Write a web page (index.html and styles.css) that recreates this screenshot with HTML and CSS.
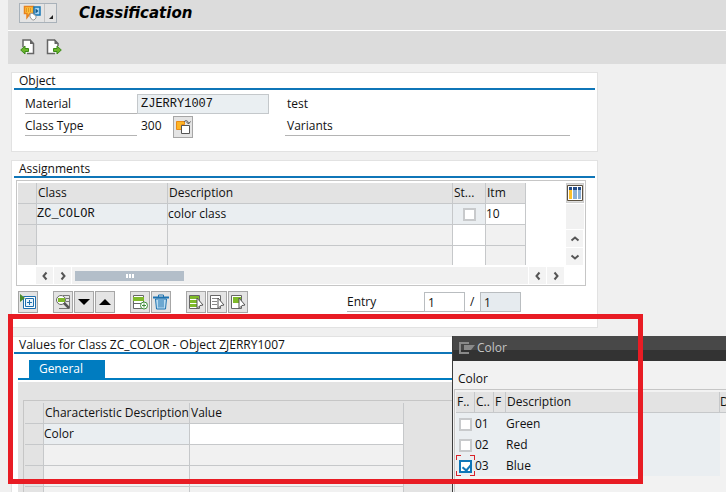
FILE: index.html
```html
<!DOCTYPE html>
<html lang="en">
<head>
    <meta charset="UTF-8">
    <meta name="viewport" content="width=device-width, initial-scale=1.0">
    <title>Classification</title>
    <link rel="stylesheet" href="styles.css">
</head>
<body>
    <div class="window">
        <header class="title-bar">
            <div class="menu-group">
                <button class="menu-main" aria-label="Services">
                    <svg width="18" height="16" viewBox="0 0 18 16">
                        <path d="M1.500 1.500h9v7H7l-3 4v-4H1.500z" fill="#fdc23c" stroke="#e8821e" stroke-width="1.500"/>
                        <path d="M3 4h6M3 6h6" stroke="#c96a10" stroke-dasharray="1 1"/>
                        <path d="M11 2h6v8h-6z" fill="#a8d4f0" stroke="#1576b4" stroke-width="1.500"/>
                        <path d="M12.500 3.500l3 2.500-3 2.500z" fill="#155a8a"/>
                        <path d="M7 9l2-1 4 3v2l-2 2H9.500L7 12z" fill="#fff" stroke="#999"/>
                    </svg>
                </button>
                <button class="menu-arrow" aria-label="More">
                    <svg width="4" height="4" viewBox="0 0 4 4"><path d="M4 0v4H0z" fill="#222"/></svg>
                </button>
            </div>
            <h1>Classification</h1>
        </header>

        <div class="toolbar">
            <button aria-label="Previous object">
                <svg width="16" height="17" viewBox="0 0 16 17">
                    <path d="M3 9V2h7l3.500 3.500V15.500H7" fill="#fff" stroke="#666" stroke-width="1.500"/>
                    <path d="M10 1v5h4z" fill="#666"/>
                    <path d="M.7 12L5 8v2.500h3.500v3H5V16z" fill="#6cb52d" stroke="#3c8a1a"/>
                </svg>
            </button>
            <button aria-label="Next object">
                <svg width="16" height="17" viewBox="0 0 16 17">
                    <path d="M12 8V5.500L8.500 2H1.500v13.500H9" fill="#fff" stroke="#666" stroke-width="1.500"/>
                    <path d="M8.500 1v5h4z" fill="#666"/>
                    <path d="M15.300 12L11 8v2.500H7.500v3H11V16z" fill="#6cb52d" stroke="#3c8a1a"/>
                </svg>
            </button>
        </div>

        <main>
            <section class="group object">
                <h2>Object</h2>
                <div class="fields">
                    <label for="material">Material</label>
                    <input id="material" class="mono" value="ZJERRY1007" readonly>
                    <span class="text">test</span>
                    <span class="label">Class Type</span>
                    <div class="class-type">
                        <span>300</span>
                        <button class="icon-btn" aria-label="Change class type">
                            <svg width="16" height="16" viewBox="0 0 16 16">
                                <path d="M1.500 2.500h8v3h-3v5h-5z" fill="#fdb525" stroke="#e98a15"/>
                                <path d="M6.500 6.500h8v8h-8z" fill="#fff" stroke="#555"/>
                                <path d="M9 3c1-2 4-2 4.500 1.500M11 2.500l2.500 2.500L15.500 2.500" fill="none" stroke="#555"/>
                            </svg>
                        </button>
                    </div>
                    <span class="text underlined">Variants</span>
                </div>
            </section>

            <section class="group assignments">
                <h2>Assignments</h2>
                <div class="table-box">
                    <div class="table-row">
                        <table class="class-table">
                            <colgroup>
                                <col class="c-select"><col class="c-class"><col class="c-desc"><col class="c-status"><col class="c-item">
                            </colgroup>
                            <thead>
                                <tr><th></th><th>Class</th><th>Description</th><th>St...</th><th>Itm</th></tr>
                            </thead>
                            <tbody>
                                <tr class="filled">
                                    <td></td><td class="mono">ZC_COLOR</td><td>color class</td>
                                    <td class="center"><input type="checkbox" aria-label="Standard class"></td>
                                    <td class="editable">10</td>
                                </tr>
                                <tr><td></td><td></td><td></td><td class="editable"></td><td></td></tr>
                                <tr><td></td><td></td><td></td><td class="editable"></td><td></td></tr>
                            </tbody>
                        </table>
                        <div class="v-scroll">
                            <button class="config" aria-label="Configuration">
                                <svg width="16" height="16" viewBox="0 0 16 16">
                                    <path d="M.5.5h15v15H.5z" fill="#fff" stroke="#5a5040"/>
                                    <path d="M2 2h3v3H2zM6 2h4v3H6zM11 2h3v3h-3z" fill="#244c86"/>
                                    <path d="M2 5h3v9H2z" fill="#fcbf2c"/>
                                    <path d="M6 5h4v9H6zM11 5h3v9h-3z" fill="#8cb0d8"/>
                                </svg>
                            </button>
                            <div class="track"></div>
                            <button class="arrow" aria-label="Up"><svg width="10" height="10" viewBox="0 0 10 10"><path d="M1.500 6.500L5 3.500l3.500 3"/></svg></button>
                            <button class="arrow" aria-label="Down"><svg width="10" height="10" viewBox="0 0 10 10"><path d="M1.500 3.500L5 6.500l3.500-3"/></svg></button>
                        </div>
                    </div>
                    <div class="h-scroll">
                        <button class="arrow" aria-label="Left"><svg width="10" height="10" viewBox="0 0 10 10"><path d="M6.500 1.500L3.500 5l3 3.500"/></svg></button>
                        <button class="arrow" aria-label="Right"><svg width="10" height="10" viewBox="0 0 10 10"><path d="M3.500 1.500L6.500 5l-3 3.500"/></svg></button>
                        <div class="track">
                            <div class="thumb"><i></i><i></i><i></i></div>
                        </div>
                        <button class="arrow" aria-label="Left"><svg width="10" height="10" viewBox="0 0 10 10"><path d="M6.500 1.500L3.500 5l3 3.500"/></svg></button>
                        <button class="arrow" aria-label="Right"><svg width="10" height="10" viewBox="0 0 10 10"><path d="M3.500 1.500L6.500 5l-3 3.500"/></svg></button>
                    </div>
                </div>

                <div class="actions">
                    <div class="btn-group">
                        <button class="icon-btn" aria-label="Open">
                            <svg width="16" height="16" viewBox="0 0 16 16">
                                <path d="M3.500 2.500h12v12h-12z" fill="#fff" stroke="#1f6fae"/>
                                <path d="M5.500 4.500h8v8h-8z" fill="#eaf4fb" stroke="#1f6fae"/>
                                <path d="M9.500 6v5M7 8.500h5" stroke="#1f6fae"/>
                                <path d="M0 0l5 4-5 4z" fill="#4a8a2c"/>
                            </svg>
                        </button>
                    </div>
                    <div class="btn-group">
                        <button class="icon-btn" aria-label="Find">
                            <svg width="16" height="16" viewBox="0 0 16 16">
                                <path d="M8 1.500h6.500v13H7M11 4.500h3M11 7.500h3M4 14.500h3" fill="none" stroke="#777"/>
                                <circle cx="6" cy="6" r="4.500" fill="#fff" stroke="#666"/>
                                <path d="M3 4h7v4H3z" fill="#7fba2a"/>
                                <path d="M9 9l5 5" stroke="#555" stroke-width="2.500"/>
                            </svg>
                        </button>
                        <button class="icon-btn" aria-label="Move down"><svg width="12" height="6" viewBox="0 0 12 6"><path d="M0 0h12L6 6z"/></svg></button>
                        <button class="icon-btn" aria-label="Move up"><svg width="12" height="6" viewBox="0 0 12 6"><path d="M0 6h12L6 0z"/></svg></button>
                    </div>
                    <div class="btn-group">
                        <button class="icon-btn" aria-label="Insert row">
                            <svg width="16" height="16" viewBox="0 0 16 16">
                                <path d="M1.500 1.500h10v13h-10z" fill="#fff" stroke="#666"/>
                                <path d="M1 3h11v4H1z" fill="#7fba2a"/>
                                <path d="M1 9.500h8" stroke="#666"/>
                                <circle cx="12" cy="11.500" r="3.500" fill="#fff" stroke="#3f8f3a"/>
                                <path d="M12 9.500v4M10 11.500h4" stroke="#3f8f3a"/>
                            </svg>
                        </button>
                        <button class="icon-btn" aria-label="Delete">
                            <svg width="16" height="16" viewBox="0 0 16 16">
                                <path d="M2.500 5h11l-1 10h-9z" fill="#bcdcf0" stroke="#1c72b0"/>
                                <path d="M0 3.500h16" stroke="#1c72b0" stroke-width="2"/>
                                <path d="M5.500 3V1h5v2M6 6v7.500M8 6v7.500M10 6v7.500" fill="none" stroke="#1c72b0"/>
                            </svg>
                        </button>
                    </div>
                    <div class="btn-group">
                        <button class="icon-btn" aria-label="Select all">
                            <svg width="16" height="16" viewBox="0 0 16 16">
                                <path d="M1.500 1.500h10v13h-10z" fill="#fff" stroke="#666"/>
                                <path d="M2 2h9v3H2zM2 6h9v3H2zM2 10h7v3H2z" fill="#7fba2a"/>
                                <path d="M9 4l6 7-3 .500-3 3z" fill="#fff" stroke="#555"/>
                            </svg>
                        </button>
                        <button class="icon-btn" aria-label="Deselect all">
                            <svg width="16" height="16" viewBox="0 0 16 16">
                                <path d="M1.500 1.500h10v13h-10z" fill="#fff" stroke="#666"/>
                                <path d="M3 4.500h7M3 7.500h5M3 10.500h5" stroke="#888"/>
                                <path d="M9 4l6 7-3 .500-3 3z" fill="#fff" stroke="#555"/>
                            </svg>
                        </button>
                        <button class="icon-btn" aria-label="Select block">
                            <svg width="16" height="16" viewBox="0 0 16 16">
                                <path d="M1.500 1.500h10v13h-10z" fill="#fff" stroke="#666"/>
                                <path d="M3 3h8v6H3z" fill="#7fba2a"/>
                                <path d="M9 4l6 7-3 .500-3 3z" fill="#fff" stroke="#555"/>
                            </svg>
                        </button>
                    </div>
                    <div class="entry">
                        <label for="entry">Entry</label>
                        <input id="entry" value="1">
                        <label for="entry-total">/</label>
                        <input id="entry-total" value="1" readonly>
                    </div>
                </div>
            </section>

            <section class="group values">
                <h2>Values for Class ZC_COLOR - Object ZJERRY1007</h2>
                <div class="tabs"><button class="tab">General</button></div>
                <div class="tab-body">
                    <div class="value-box">
                        <table class="value-table">
                            <colgroup><col class="c-select"><col class="c-char"><col class="c-value"></colgroup>
                            <thead>
                                <tr><th></th><th>Characteristic Description</th><th>Value</th></tr>
                            </thead>
                            <tbody>
                                <tr class="filled"><td></td><td>Color</td><td class="editable"></td></tr>
                                <tr><td></td><td></td><td></td></tr>
                                <tr><td></td><td></td><td></td></tr>
                                <tr><td></td><td></td><td></td></tr>
                            </tbody>
                        </table>
                    </div>
                </div>
            </section>
        </main>

        <!-- Value selection popup -->
        <div class="dialog" role="dialog" aria-label="Color">
            <div class="dialog-title">
                <svg width="16" height="12" viewBox="0 0 16 12">
                    <path d="M10 1H1v10h9" fill="none" stroke="#8a8a8a" stroke-width="2"/>
                    <path d="M5 3h11l-4 5H5z" fill="#8a8a8a"/>
                </svg>
                <span>Color</span>
            </div>
            <p>Color</p>
            <div class="color-box">
                <table class="color-table">
                    <colgroup><col class="c-flag"><col class="c-code"><col class="c-f"><col class="c-name"><col></colgroup>
                    <thead>
                        <tr><th>F..</th><th>C..</th><th>F</th><th>Description</th><th>D</th></tr>
                    </thead>
                    <tbody>
                        <tr><td><input type="checkbox" aria-label="Green"></td><td>01</td><td></td><td>Green</td><td></td></tr>
                        <tr><td><input type="checkbox" aria-label="Red"></td><td>02</td><td></td><td>Red</td><td></td></tr>
                        <tr><td class="focused"><input type="checkbox" aria-label="Blue" checked></td><td>03</td><td></td><td>Blue</td><td></td></tr>
                        <tr class="empty"><td></td><td></td><td></td><td></td><td></td></tr>
                    </tbody>
                </table>
            </div>
        </div>

        <div class="highlight"></div>
    </div>
</body>
</html>
```
FILE: styles.css
```css
* {
  box-sizing: border-box;
  margin: 0;
  padding: 0;
}

body {
  font-family: 'Open Sans', sans-serif;
  font-size: 12px;
  line-height: 16px;
  color: #111;
  background-color: #f0f0f0;
}

button, input {
  font: inherit;
  color: inherit;
}

button {
  display: flex;
  align-items: center;
  justify-content: center;
  border: none;
  background: none;
}

svg {
  flex-shrink: 0;
}

.mono,
input.mono {
  font-family: 'Liberation Mono', monospace;
}

.window {
  position: relative;
  height: 100vh;
  padding-left: 8px;
  overflow: hidden;
}

/* Title and toolbar */
.title-bar {
  display: flex;
  align-items: center;
  gap: 22px;
  height: 31px;
  padding: 0 11px 4px;
  background-color: #dcdcdc;
  border-bottom: 1px solid #fff;
}

.title-bar h1 {
  font-family: 'DejaVu Sans', sans-serif;
  font-size: 15px;
  font-weight: bold;
  font-style: italic;
  color: #000;
}

.menu-group {
  display: flex;
  width: 38px;
  height: 20px;
  border: 1px solid #a9b2ba;
  background-color: #e4e4e4;
}

.menu-main {
  width: 25px;
  border-right: 1px solid #c4c4c4;
}

.menu-arrow {
  flex: 1;
  align-items: flex-end;
  padding-bottom: 3px;
}

.toolbar {
  display: flex;
  gap: 10px;
  height: 33px;
  padding: 0 12px 3px;
  background-color: #dcdcdc;
}

main {
  display: flex;
  flex-direction: column;
  gap: 8px;
  max-width: 590px;
  padding: 8px 0 0 3px;
}

.group {
  border: 1px solid #e2e2e2;
  background-color: #fff;
  padding: 0 2px;
}

.group h2 {
  font-size: 12px;
  font-weight: normal;
  height: 17px;
  padding-left: 5px;
  border-bottom: 2px solid #0f76b8;
}

/* Object */
.fields {
  display: grid;
  grid-template-columns: 112px 132px 1fr;
  padding: 4px 25px 13px 11px;
}

.fields > * {
  height: 20px;
  line-height: 20px;
  margin-bottom: 2px;
}

.fields label, .fields .label, .underlined {
  border-bottom: 1px solid #b4b4b4;
}

.fields input {
  padding: 0 3px;
  border: 1px solid #c4c8cb;
  background-color: #eaeff2;
}

.fields .text {
  margin-left: 16px;
  padding-left: 2px;
}

.class-type {
  display: flex;
  gap: 11px;
  padding-left: 4px;
}

/* Assignments */
.table-box {
  display: flex;
  flex-direction: column;
  gap: 2px;
  margin: 2px 9px 5px 2px;
  padding: 2px 1px 1px;
  border: 1px solid #c6c6c6;
}

.table-row {
  display: flex;
  justify-content: space-between;
}

table {
  table-layout: fixed;
  border-collapse: separate;
  border-spacing: 0;
}

th, td {
  height: 21px;
  padding: 0;
  font-weight: normal;
  text-align: left;
  white-space: nowrap;
  border-right: 1px solid #c6c8ca;
  border-bottom: 1px solid #c6c8ca;
}

th {
  padding-left: 1px;
  background-color: #e3e3e3;
}

td {
  background-color: #f1f1f1;
}

td:first-child {
  background-color: #e3e3e3;
}

.filled td {
  background-color: #eaeef1;
}

.filled td:first-child {
  background-color: #e3e3e3;
}

.filled td.editable,
td.editable {
  background-color: #fff;
}

td.center {
  text-align: center;
}

tbody tr:last-child td {
  border-bottom: none;
}

.class-table {
  width: 508px;
}

.class-table tbody tr:last-child td {
  height: 19px;
}

.c-select {
  width: 19px;
}

.c-class {
  width: 131px;
}

.c-status {
  width: 33px;
}

.c-item {
  width: 40px;
}

input[type="checkbox"] {
  display: inline-block;
  appearance: none;
  width: 13px;
  height: 13px;
  vertical-align: middle;
  border: 2px solid #c8cacc;
  background-color: #fff;
}

input[type="checkbox"]:checked {
  position: relative;
  border-color: #0f76b8;
}

input[type="checkbox"]:checked::after {
  content: '';
  position: absolute;
  left: 3px;
  top: 0;
  width: 4px;
  height: 7px;
  border: solid #0f76b8;
  border-width: 0 2px 2px 0;
  transform: rotate(40deg);
}

.v-scroll {
  display: flex;
  flex-direction: column;
  gap: 1px;
  width: 18px;
}

.v-scroll .track {
  flex: 1;
  background-color: #f1f1f1;
}

.config {
  width: 18px;
  height: 20px;
  background-color: #dcdcdc;
  border: 1px solid #ccc;
}

.arrow {
  width: 17px;
  height: 17px;
  background-color: #f3f3f3;
}

.arrow path {
  fill: none;
  stroke: #555;
  stroke-width: 2;
}

.h-scroll {
  display: flex;
  gap: 1px;
  padding: 0 20px 0 18px;
}

.h-scroll .track {
  flex: 1;
  display: flex;
  align-items: center;
  padding-left: 3px;
  background-color: #f1f1f1;
}

.thumb {
  display: flex;
  align-items: center;
  justify-content: center;
  gap: 1px;
  width: 109px;
  height: 10px;
  background-color: #b3bec9;
}

.thumb i {
  width: 2px;
  height: 4px;
  background-color: #fff;
}

.actions {
  display: flex;
  gap: 15px;
  padding: 0 0 14px 4px;
}

.btn-group {
  display: flex;
  gap: 1px;
}

.icon-btn {
  width: 20px;
  height: 22px;
  border: 1px solid #a6a6a6;
  background-color: #e4e4e4;
}

.entry {
  display: flex;
  margin-left: 84px;
  padding-top: 1px;
}

.entry label {
  width: 77px;
  height: 20px;
  line-height: 20px;
  border-bottom: 1px solid #b4b4b4;
}

.entry label + input + label {
  width: 15px;
  padding-left: 5px;
}

.entry input {
  width: 41px;
  height: 20px;
  padding: 0 3px;
  border: 1px solid #b9bdc0;
}

.entry input[readonly] {
  background-color: #e6ebef;
}

/* Values */
.tabs {
  display: flex;
  margin-left: 4px;
  padding: 6px 0 0 11px;
  border-bottom: 2px solid #007cc0;
}

.tab {
  width: 76px;
  height: 18px;
  padding-right: 12px;
  color: #fff;
  background-color: #007cc0;
}

.tab-body {
  margin: 2px 0 0 4px;
  padding: 18px 0 0 5px;
  background-color: #e3e3e3;
}

.value-box {
  padding: 2px 0 0 1px;
  border: 1px solid #c6c6c6;
  border-right: none;
}

.value-table {
  width: 379px;
}

.c-char {
  width: 146px;
}

/* Popup */
.dialog {
  position: absolute;
  left: 452px;
  right: 0;
  top: 336px;
  bottom: 0;
  border-left: 1px solid #3c3c3c;
  background-color: #f2f2f2;
}

.dialog-title {
  display: flex;
  align-items: center;
  gap: 2px;
  height: 25px;
  padding: 0 6px 2px;
  color: #c4c4c4;
  background: linear-gradient(#484848 14px, #333 14px);
}

.dialog p {
  padding: 10px 0 2px 5px;
}

.color-box {
  margin-left: 1px;
  padding: 2px 0 0 1px;
  border: 1px solid #c6c6c6;
  border-width: 1px 0 0 1px;
}

.color-table {
  width: 100%;
}

.color-table th:last-child {
  padding: 0;
  border-right: none;
}

.color-table td,
.color-table td:first-child {
  border: none;
  background-color: #eaeef1;
}

.color-table td:first-child {
  padding-left: 3px;
}

.color-table td:last-child,
.color-table .empty td {
  background-color: #f2f2f2;
}

.c-flag {
  width: 19px;
}

.c-code {
  width: 19px;
}

.c-f {
  width: 12px;
}

.c-name {
  width: 214px;
}

/* Red corners round the focused cell */
.color-table td.focused {
  background:
    linear-gradient(90deg, #d8232a 5px, transparent 5px 14px, #d8232a 14px) top / 100% 1px no-repeat,
    linear-gradient(90deg, #d8232a 5px, transparent 5px 14px, #d8232a 14px) bottom / 100% 1px no-repeat,
    linear-gradient(#d8232a 5px, transparent 5px 16px, #d8232a 16px) left / 1px 100% no-repeat,
    linear-gradient(#d8232a 5px, transparent 5px 16px, #d8232a 16px) right / 1px 100% no-repeat,
    #eaeef1;
}

/* Marker frame */
.highlight {
  position: absolute;
  left: 8px;
  top: 314px;
  width: 635px;
  height: 170px;
  border: 5px solid #e81c24;
  pointer-events: none;
}
```
